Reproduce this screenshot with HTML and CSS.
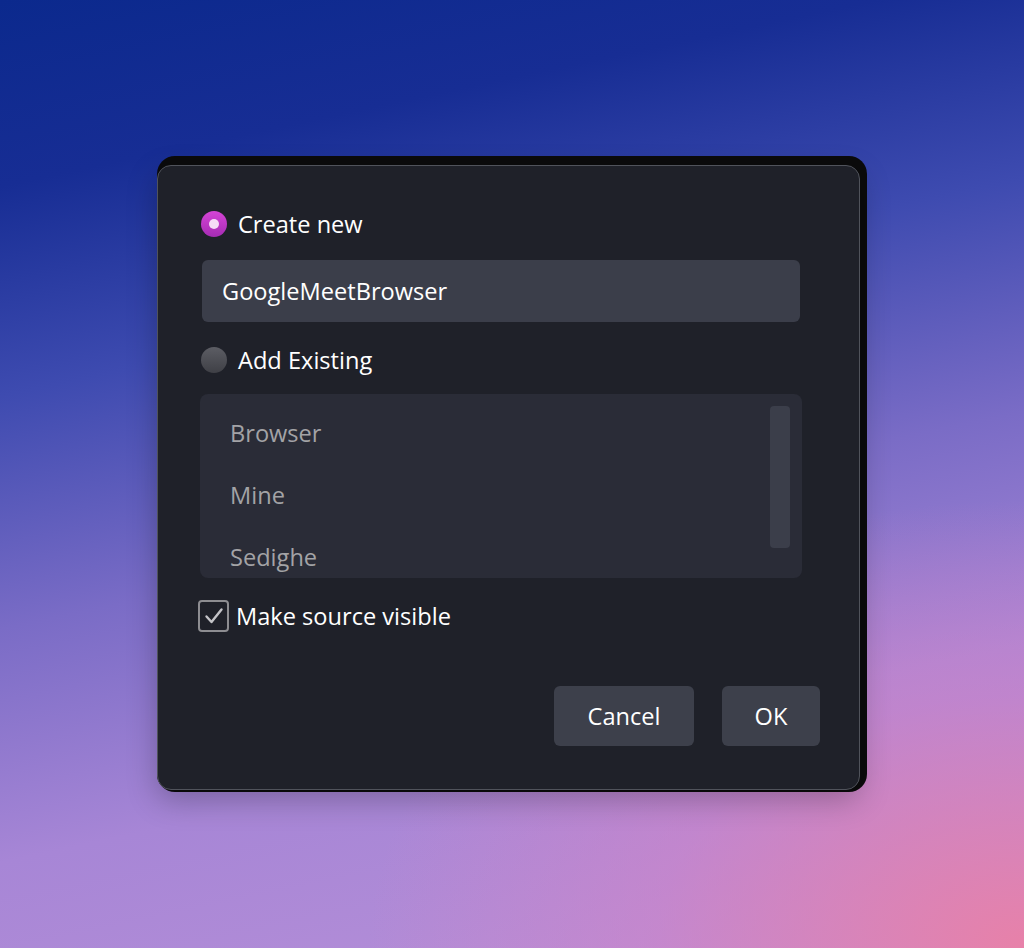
FILE: index.html
```html
<!DOCTYPE html>
<html>
<head>
<meta charset="utf-8">
<link rel="stylesheet" href="styles.css">
</head>
<body>
<div class="stage">
  <div class="dialog">
    <label class="option">
      <span class="radio radio-on"><span class="radio-dot"></span></span>
      <span class="option-text">Create new</span>
    </label>
    <div class="input">GoogleMeetBrowser</div>
    <label class="option option-second">
      <span class="radio radio-off"></span>
      <span class="option-text">Add Existing</span>
    </label>
    <div class="list">
      <ul class="list-items">
        <li>Browser</li>
        <li>Mine</li>
        <li>Sedighe</li>
      </ul>
      <div class="scrollbar"></div>
    </div>
    <label class="check">
      <span class="checkbox">
        <svg width="24" height="24" viewBox="0 0 24 24"><path d="M4.5 12.5 L9.5 18 L19.5 5.5" fill="none" stroke="#c4c4c8" stroke-width="2.4" stroke-linecap="round" stroke-linejoin="round"/></svg>
      </span>
      <span class="option-text">Make source visible</span>
    </label>
    <div class="buttons">
      <button class="btn btn-cancel">Cancel</button>
      <button class="btn btn-ok">OK</button>
    </div>
  </div>
</div>
</body>
</html>
```
FILE: styles.css
```css
html, body {
  margin: 0;
  padding: 0;
}
body {
  width: 1024px;
  height: 948px;
  overflow: hidden;
  font-family: "Open Sans", "Noto Sans", sans-serif;
}
.stage {
  position: relative;
  z-index: 0;
  width: 1024px;
  height: 948px;
  box-sizing: border-box;
  padding: 165px 0 0 157px;
  background:
    radial-gradient(ellipse 820px 560px at 1024px 948px, rgba(234,128,166,0.95), rgba(214,130,196,0.5) 45%, rgba(214,130,196,0) 80%),
    linear-gradient(168deg, #0b298d 0%, #172d94 16%, #3e4bb0 34%, #7a6cc6 54%, #a786d6 74%, #b890d8 100%);
}
.dialog {
  position: relative;
  width: 703px;
  height: 625px;
  box-sizing: border-box;
  padding: 43px 39px 43px 43px;
  background: #1f2129;
  border: 1px solid #50535b;
  border-radius: 14px;
  display: flex;
  flex-direction: column;
  color: #ffffff;
  box-shadow: 0 10px 30px rgba(0,0,0,0.25);
}
.dialog::before {
  content: "";
  position: absolute;
  top: -10px;
  left: -1px;
  right: -8px;
  bottom: -3px;
  background: #0b0b0c;
  border-radius: 18px;
  z-index: -1;
}
.option {
  display: flex;
  align-items: center;
  height: 30px;
  gap: 11px;
}
.option-second {
  margin-top: 23px;
}
.option-text {
  font-size: 23.6px;
  line-height: 30px;
  color: #ffffff;
}
.radio {
  width: 26px;
  height: 26px;
  border-radius: 50%;
  display: flex;
  align-items: center;
  justify-content: center;
  flex: none;
}
.radio-on {
  background: linear-gradient(180deg, #d544d6 0%, #a52cb3 100%);
}
.radio-dot {
  width: 10px;
  height: 10px;
  border-radius: 50%;
  background: #f6dcf6;
}
.radio-off {
  background: linear-gradient(180deg, #5c5d64 0%, #3f4046 100%);
}
.input {
  margin-top: 21px;
  margin-left: 1px;
  width: 598px;
  height: 62px;
  box-sizing: border-box;
  padding: 0 20px;
  background: #3b3e4a;
  border-radius: 6px;
  font-size: 23.6px;
  line-height: 62px;
  color: #ffffff;
}
.list {
  margin-top: 19px;
  margin-left: -1px;
  width: 602px;
  height: 184px;
  box-sizing: border-box;
  background: #2a2c37;
  border-radius: 8px;
  display: flex;
  justify-content: space-between;
  padding: 12px 12px 30px 30px;
  overflow: hidden;
}
.list-items {
  list-style: none;
  margin: 0;
  padding: 0;
  font-size: 23.6px;
  color: #a3a3a6;
}
.list-items li {
  height: 62px;
  line-height: 30px;
  padding-top: 12px;
  box-sizing: border-box;
}
.scrollbar {
  width: 20px;
  height: 142px;
  background: #3b3e4a;
  border-radius: 4px;
  flex: none;
}
.check {
  margin-top: 22px;
  margin-left: -3px;
  display: flex;
  align-items: center;
  gap: 7px;
  height: 32px;
}
.checkbox {
  width: 31px;
  height: 32px;
  box-sizing: border-box;
  border: 2px solid #8d8d91;
  border-radius: 4px;
  display: flex;
  align-items: center;
  justify-content: center;
}
.checkbox svg {
  display: block;
}
.buttons {
  margin-top: 54px;
  display: flex;
  justify-content: flex-end;
  gap: 28px;
}
.btn {
  height: 60px;
  border: none;
  border-radius: 6px;
  background: #3d404b;
  color: #ffffff;
  font-family: "Open Sans", "Noto Sans", sans-serif;
  font-size: 23.6px;
  padding: 0;
}
.btn-cancel {
  width: 140px;
}
.btn-ok {
  width: 98px;
}
```
